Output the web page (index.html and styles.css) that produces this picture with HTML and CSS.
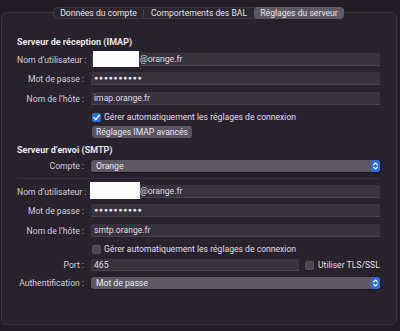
FILE: index.html
```html
<!DOCTYPE html>
<html lang="fr">
<head>
<meta charset="utf-8">
<link rel="stylesheet" href="styles.css">
</head>
<body>
<div class="tabwrap">
  <div class="tabbar">
    <div class="tab t1">Données du compte</div>
    <div class="sep"></div>
    <div class="tab t2">Comportements des BAL</div>
    <div class="tab sel">Réglages du serveur</div>
  </div>
</div>
<div class="panel">
  <div class="head">Serveur de réception (IMAP)</div>
  <div class="row r-user1"><div class="lbl">Nom d’utilisateur :</div><div class="field user"><span class="redact r1"></span>@orange.fr</div></div>
  <div class="row r-pw1"><div class="lbl">Mot de passe :</div><div class="field dots">●●●●●●●●●●</div></div>
  <div class="row r-host1"><div class="lbl">Nom de l’hôte :</div><div class="field">imap.orange.fr</div></div>
  <div class="row r-chk1"><div></div><label class="check"><span class="box on"><svg viewBox="0 0 9 9" width="9" height="9"><path d="M2 4.6 L3.8 6.6 L7.2 2.2" fill="none" stroke="#fff" stroke-width="1.4" stroke-linecap="round" stroke-linejoin="round"/></svg></span>Gérer automatiquement les réglages de connexion</label></div>
  <div class="row r-btn"><div></div><div><span class="btn">Réglages IMAP avancés</span></div></div>
  <div class="head h2">Serveur d’envoi (SMTP)</div>
  <div class="row r-compte"><div class="lbl">Compte :</div><div class="popup">Orange<span class="step"><svg viewBox="0 0 9 12" width="9" height="12"><path d="M2.6 4.8 L4.5 3 L6.4 4.8 M2.6 7.2 L4.5 9 L6.4 7.2" fill="none" stroke="#fff" stroke-width="1.1" stroke-linecap="round" stroke-linejoin="round"/></svg></span></div></div>
  <div class="divider"></div>
  <div class="row r-user2"><div class="lbl">Nom d’utilisateur :</div><div class="field user"><span class="redact r2"></span>@orange.fr</div></div>
  <div class="row r-pw2"><div class="lbl">Mot de passe :</div><div class="field dots">●●●●●●●●●●</div></div>
  <div class="row r-host2"><div class="lbl">Nom de l’hôte :</div><div class="field">smtp.orange.fr</div></div>
  <div class="row r-chk2"><div></div><label class="check"><span class="box"></span>Gérer automatiquement les réglages de connexion</label></div>
  <div class="row r-port"><div class="lbl">Port :</div><div class="portline"><div class="field port">465</div><label class="check tls"><span class="box"></span>Utiliser TLS/SSL</label></div></div>
  <div class="row r-auth"><div class="lbl">Authentification :</div><div class="popup">Mot de passe<span class="step"><svg viewBox="0 0 9 12" width="9" height="12"><path d="M2.6 4.8 L4.5 3 L6.4 4.8 M2.6 7.2 L4.5 9 L6.4 7.2" fill="none" stroke="#fff" stroke-width="1.1" stroke-linecap="round" stroke-linejoin="round"/></svg></span></div></div>
</div>
</body>
</html>
```
FILE: styles.css
```css
* { box-sizing: border-box; }
html, body { margin: 0; padding: 0; }
body {
  width: 400px;
  height: 331px;
  overflow: hidden;
  background: #221e27;
  font-family: Roboto, "Noto Sans", sans-serif;
  font-size: 8.6px;
  color: #dedbe2;
  line-height: 12px;
  white-space: nowrap;
}
.tabwrap {
  padding: 7px 0 0 53px;
  margin-bottom: -7px;
  position: relative;
  z-index: 1;
}
.tabbar {
  display: inline-flex;
  align-items: center;
  width: 291px;
  height: 12px;
  border: 1px solid #3d3843;
  border-radius: 5px;
  background: #2b2630;
}
.tab {
  height: 10px;
  line-height: 10px;
  text-align: center;
  color: #e4e1e8;
}
.t1 { width: 89px; }
.sep { width: 1px; height: 7px; background: #4a4550; }
.t2 { width: 110px; }
.sel {
  width: 90px;
  height: 12px;
  line-height: 12px;
  margin-right: -1px;
  background: #5d5864;
  border-radius: 4px;
}
.panel {
  margin: 0 3px 0 1px;
  height: 313px;
  border: 1px solid #38333e;
  border-radius: 6px;
  background: #27222c;
  padding: 23px 16px 0 15px;
}
.head {
  font-weight: 700;
  font-size: 9px;
  height: 12px;
  color: #e8e5ec;
}
.row {
  display: grid;
  grid-template-columns: 67px 1fr;
  column-gap: 7px;
  align-items: center;
  height: 13px;
}
.lbl { text-align: right; color: #d3d0d7; }
.field {
  position: relative;
  height: 13px;
  background: #37323c;
  border-bottom: 1px solid #48434e;
  padding-left: 3px;
  line-height: 12px;
}
.field.user { padding-left: 49px; }
.field.dots { font-size: 7px; letter-spacing: 0.6px; padding-left: 3px; }
.redact {
  position: absolute;
  top: -2px;
  background: #ffffff;
}
.r1 { left: 2px; width: 46px; height: 16px; }
.r2 { left: -1px; width: 50px; height: 17px; top: -3px; }
.r-user1 { margin-top: 5px; }
.r-pw1 { margin-top: 6px; }
.r-host1 { margin-top: 7px; }
.r-chk1 { margin-top: 6px; height: 10px; }
.r-btn { margin-top: 5px; height: 12px; }
.h2 { margin-top: 6px; }
.r-compte { margin-top: 4px; height: 12px; }
.divider { margin-top: 6px; height: 1px; background: #36313b; margin-left: 1px; }
.r-user2 { margin-top: 6px; }
.r-pw2 { margin-top: 6px; }
.r-host2 { margin-top: 7px; }
.r-chk2 { margin-top: 6px; height: 10px; }
.r-port { margin-top: 6px; height: 12px; }
.r-auth { margin-top: 6px; height: 12px; }
.check {
  display: flex;
  align-items: center;
  color: #e2dfe6;
}
.box {
  width: 9px;
  height: 9px;
  border-radius: 2px;
  background: #4c4752;
  border: 1px solid #57525d;
  margin: 0 3px 0 1px;
  display: inline-flex;
  flex: none;
}
.box.on { background: #2d6fe3; border-color: #2d6fe3; }
.box.on svg { margin: -1px; }
.btn {
  display: inline-block;
  width: 100px;
  height: 12px;
  line-height: 12px;
  margin-left: 1px;
  background: #5a5660;
  border-radius: 3px;
  text-align: center;
  color: #e6e3ea;
}
.popup {
  display: flex;
  align-items: center;
  justify-content: space-between;
  height: 12px;
  background: #5d5864;
  border-radius: 3px;
  padding-left: 5px;
  color: #ebe8ef;
  box-shadow: 0 0.5px 1px rgba(0,0,0,0.4);
}
.step {
  width: 9px;
  height: 12px;
  background: #2d6fe3;
  border-radius: 3px;
  display: flex;
}
.portline { display: flex; align-items: center; }
.field.port { width: 208px; height: 12px; }
.tls { margin-left: 5px; }
.tls .box { margin: 0 4px 0 1px; }
```
